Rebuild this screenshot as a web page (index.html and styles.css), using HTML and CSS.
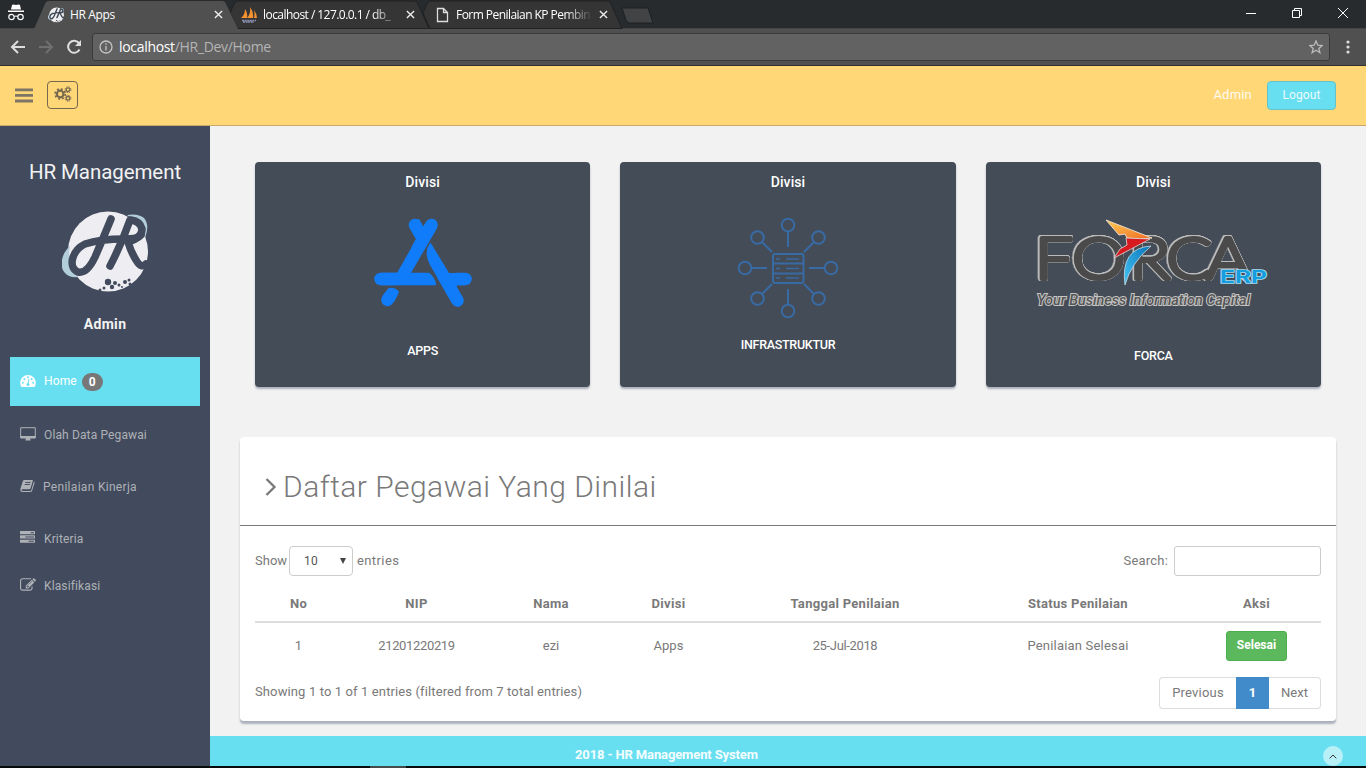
FILE: index.html
```html
<!DOCTYPE html>
<html lang="id">
<head>
<meta charset="utf-8">
<title>HR Apps</title>
<link rel="stylesheet" href="styles.css">
</head>
<body>
<svg class="defs" width="0" height="0">
  <defs>
    <symbol id="monogram" viewBox="0 0 86 82">
      <circle cx="46" cy="40.500" r="40" fill="#eeeef2"/>
      <path d="M8 35C-1 43-3 56 3 62Q7 67 16 66Q7 58 7 47Q7 40 8 35zM65 4Q76 2 82 7Q88 14 83 27Q79 14 65 4z" fill="#b3cedb"/>
      <g fill="none" stroke="currentColor" stroke-width="7.500" stroke-linecap="round" stroke-linejoin="round">
        <path d="M49 8Q40 30 33 46Q25 63 16 61C6 57 9 40 23 33Q38 28 62 28Q76 28 79 24"/>
        <path d="M68 9Q60 32 48 55M69 9Q78 10 80 18Q80 27 66 31Q69 41 74 49Q79 58 84 53"/>
      </g>
      <g fill="currentColor"><circle cx="46" cy="71" r="3.200"/><circle cx="53" cy="72" r="2"/><circle cx="50" cy="76" r="2.200"/><circle cx="57" cy="74" r="1.500"/><circle cx="63" cy="71" r="2"/><circle cx="67" cy="69" r="1.500"/><circle cx="68" cy="73" r="1.500"/><circle cx="42" cy="77" r="1.500"/><circle cx="38" cy="79" r="1.500"/><circle cx="60" cy="76" r="1"/></g>
    </symbol>
  </defs>
</svg>

<div class="browser">
  <div class="tabs">
    <svg class="incognito" viewBox="0 0 18 18" width="18" height="18"><path d="M5 1l1.500-.6 2.500.7 2.500-.7 1.500.6 1 4.500H4zM1 6.500h16v1.500H1z" fill="#fff"/><g fill="none" stroke="#fff" stroke-width="1.200"><circle cx="4.500" cy="13" r="2.700"/><circle cx="13.500" cy="13" r="2.700"/><path d="M7.200 12.500q1.800-1 3.600 0"/></g></svg>
    <div class="tab tab-active">
      <svg class="tab-shape" viewBox="0 0 206 29" preserveAspectRatio="none"><path d="M0 29L11 4q1-3 4-3H188q3 0 4 3l12 25z" fill="#505050"/></svg>
      <svg class="favicon logo-dark" width="16" height="16"><use href="#monogram"/></svg>
      <span class="tab-title">HR Apps</span>
      <svg class="close" viewBox="0 0 10 10"><path d="M1 1l8 8M9 1l-8 8"/></svg>
    </div>
    <div class="tab">
      <svg class="tab-shape" viewBox="0 0 206 29" preserveAspectRatio="none"><path d="M10 28.500L3 13 7 4q1-3 4-3H187q3 0 4 3l11 24.500z" fill="#353535" stroke="#202123"/></svg>
      <svg class="favicon" viewBox="0 0 16 16"><path d="M0 11Q4 8 4 2q3 4 2 9zM6 11Q10 7 9 0q4 5 3 11zM13 11q1-4 0-8 3 4 3 8z" fill="#f59331"/><path d="M1 13.500h14M2 15h11" stroke="#8b8fae" stroke-width="1.300" stroke-dasharray="2 .6"/></svg>
      <span class="tab-title tab-faded">localhost / 127.0.0.1 / db_</span>
      <svg class="close" viewBox="0 0 10 10"><path d="M1 1l8 8M9 1l-8 8"/></svg>
    </div>
    <div class="tab">
      <svg class="tab-shape" viewBox="0 0 206 29" preserveAspectRatio="none"><path d="M10 28.500L3 13 7 4q1-3 4-3H187q3 0 4 3l11 24.500z" fill="#353535" stroke="#202123"/></svg>
      <svg class="favicon" viewBox="0 0 16 16"><path d="M3.500 1.500h6l4 4v9h-10zM9.500 1.500v4h4" fill="none" stroke="#ddd" stroke-width="1.300"/></svg>
      <span class="tab-title tab-faded">Form Penilaian KP Pembin</span>
      <svg class="close" viewBox="0 0 10 10"><path d="M1 1l8 8M9 1l-8 8"/></svg>
    </div>
    <svg class="new-tab" viewBox="0 0 34 18"><path d="M1 1h26l5 15H9q-3 0-4-3z" fill="#414344" stroke="#1e2022"/></svg>
    <div class="window-controls">
      <svg viewBox="0 0 12 12"><path d="M1 6.500h10"/></svg>
      <svg viewBox="0 0 12 12"><path d="M1.500 3.500h7v7h-7zM3.500 3.500v-2h7v7h-2"/></svg>
      <svg viewBox="0 0 12 12"><path d="M1 1l10 10M11 1L1 11"/></svg>
    </div>
  </div>
  <div class="toolbar">
    <svg class="nav" viewBox="0 0 16 16"><path d="M15 8H2M8 2L2 8l6 6"/></svg>
    <svg class="nav nav-off" viewBox="0 0 16 16"><path d="M1 8h13M8 2l6 6-6 6"/></svg>
    <svg class="nav" viewBox="0 0 16 16"><path d="M13.500 10.500A6 6 0 1 1 12.800 4"/><path d="M15 1v6H9z" fill="#ddd" stroke="none"/></svg>
    <div class="address">
      <svg class="info" viewBox="0 0 14 14"><circle cx="7" cy="7" r="6"/><path d="M7 6v4.500M7 3.300v1.500"/></svg>
      <span class="url"><b>localhost</b>/HR_Dev/Home</span>
      <svg class="star" viewBox="0 0 14 14"><path d="M7 1l1.800 4.200 4.400.3-3.400 2.900 1.100 4.300L7 10.300l-3.900 2.400 1.100-4.300L.8 5.500l4.400-.3z"/></svg>
    </div>
    <svg class="menu-dots" viewBox="0 0 4 14"><circle cx="2" cy="2" r="1.600"/><circle cx="2" cy="7" r="1.600"/><circle cx="2" cy="12" r="1.600"/></svg>
  </div>
</div>

<header class="header">
  <svg class="bars" viewBox="0 0 18 15"><path d="M0 1.800h18M0 7.400h18M0 13h18"/></svg>
  <button class="gears-button">
    <svg viewBox="0 0 18 16" width="18" height="16" fill="none" stroke="#75684f"><circle cx="6.200" cy="8" r="3.300" stroke-width="2.200"/><circle cx="6.200" cy="8" r="5.100" stroke-width="1.600" stroke-dasharray="2 2"/><circle cx="14" cy="3.700" r="1.800" stroke-width="1.300"/><circle cx="14" cy="3.700" r="2.900" stroke-width="1" stroke-dasharray="1.280 1"/><circle cx="14" cy="12.300" r="1.800" stroke-width="1.300"/><circle cx="14" cy="12.300" r="2.900" stroke-width="1" stroke-dasharray="1.280 1"/></svg>
  </button>
  <span class="user-name">Admin</span>
  <button class="logout">Logout</button>
</header>

<div class="shell">
  <aside class="sidebar">
    <h3 class="brand">HR Management</h3>
    <svg class="avatar" width="86" height="82"><use href="#monogram"/></svg>
    <h5 class="role">Admin</h5>
    <nav class="side-menu">
      <a class="item item-active"><svg viewBox="0 0 16 14" width="16" height="14"><path d="M1.500 13Q.2 11 .2 8.800A7.800 7.800 0 0 1 15.800 8.800Q15.800 11 14.500 13z" fill="#fff"/><g fill="#68dff0"><circle cx="2.800" cy="8.800" r="1"/><circle cx="4.400" cy="5" r="1"/><circle cx="8" cy="3.300" r="1"/><circle cx="11.600" cy="5" r="1"/><circle cx="13.200" cy="8.800" r="1"/><circle cx="8" cy="10.500" r="1.500"/></g><path d="M8 10l1-5" stroke="#68dff0"/></svg><span class="label">Home</span><span class="badge">0</span></a>
      <a class="item item-desktop"><svg viewBox="0 0 16 14" width="16" height="14"><path d="M.7.700h14.600v10.300H.7z" fill="none" stroke="currentColor"/><path d="M.5 9h15v2H.5zM6 11h4l.6 2.500H5.400z" fill="currentColor"/></svg><span class="label">Olah Data Pegawai</span></a>
      <a class="item item-book"><svg viewBox="0 0 16 14" width="15" height="14"><path d="M4.500.5H13q1 0 .7 1l-2.500 8q-.3 1-1.300 1H2.500q-1 0-.8 1t1.300.8h8q.8 0 1-.8l2.400-8 .6-1.200q.8.500.5 1.500l-2.500 8q-.4 1.700-2 1.700H2.800Q.3 13.500.3 10.500L3 2Q3.500.5 4.500.5z" fill="currentColor"/><path d="M5.700 3.200h5.600M5 5.400h5.600" stroke="#424a5d"/></svg><span class="label">Penilaian Kinerja</span></a>
      <a class="item item-tasks"><svg viewBox="0 128 1792 1536" width="15" height="13"><path fill="currentColor" d="M1024 1408h640v-128h-640v128zm-384-512h1024v-128h-1024v128zm640-512h384v-128h-384v128zm512 832v256q0 26-19 45t-45 19h-1664q-26 0-45-19t-19-45v-256q0-26 19-45t45-19h1664q26 0 45 19t19 45zm0-512v256q0 26-19 45t-45 19h-1664q-26 0-45-19t-19-45v-256q0-26 19-45t45-19h1664q26 0 45 19t19 45zm0-512v256q0 26-19 45t-45 19h-1664q-26 0-45-19t-19-45v-256q0-26 19-45t45-19h1664q26 0 45 19t19 45z"/></svg><span class="label">Kriteria</span></a>
      <a class="item item-edit"><svg viewBox="0 128 1792 1536" width="16" height="14"><path fill="currentColor" d="M888 1184l116-116-152-152-116 116v56h96v96h56zm440-720q-16-16-33 1l-350 350q-17 17-1 33t33-1l350-350q17-17 1-33zm80 594v190q0 119-84.500 203.500t-203.500 84.500h-832q-119 0-203.500-84.500t-84.500-203.500v-832q0-119 84.500-203.500t203.500-84.500h832q63 0 117 25 15 7 18 23 3 17-9 29l-49 49q-14 14-32 8-23-6-45-6h-832q-66 0-113 47t-47 113v832q0 66 47 113t113 47h832q66 0 113-47t47-113v-126q0-13 9-22l64-64q15-15 35-7t20 29zm-96-738l288 288-672 672h-288v-288zm444 132l-92 92-288-288 92-92q28-28 68-28t68 28l152 152q28 28 28 68t-28 68z"/></svg><span class="label">Klasifikasi</span></a>
    </nav>
  </aside>

  <main class="main">
    <section class="cards">
      <article class="card">
        <h5 class="card-title">Divisi</h5>
        <svg class="pic-apps" viewBox="0 0 100 90" width="100" height="90"><g fill="none" stroke="#117cf9" stroke-width="12.500" stroke-linecap="round"><path d="M58.500 8L45 31M42 8L47 17M7.500 62H25M92.500 62H84M71 60L84.500 83.500M14.500 83L16 80.500"/></g><path d="M37 6L46 2 56 19 41 42 43 22zM53 5L64 11 38 56H24zM8 55.800H56Q63 61 63 68.300H8zM15 71.500Q21 69 26 74.500Q26 76 21 85L9 80zM57.500 25.500L76 56H92V68.300H84L79 86 57 48Q50 35 57.500 25.500z" fill="#117cf9"/></svg>
        <p class="card-name">APPS</p>
      </article>
      <article class="card card-infra">
        <h5 class="card-title">Divisi</h5>
        <svg class="pic-infra" viewBox="0 0 102 102" width="102" height="102" fill="none" stroke="#386aa3" stroke-width="2"><circle cx="51" cy="8" r="6.300"/><circle cx="81.500" cy="20.500" r="6.300"/><circle cx="94" cy="51" r="6.300"/><circle cx="81.500" cy="81.500" r="6.300"/><circle cx="51" cy="94" r="6.300"/><circle cx="20.500" cy="81.500" r="6.300"/><circle cx="8" cy="51" r="6.300"/><circle cx="20.500" cy="20.500" r="6.300"/><path d="M51 14.500V30M51 72v15.500M14.500 51H30M72 51h15.500M25 25l10 10M77 25L67 35M25 77l10-10M77 77L67 67"/><rect x="36" y="37" width="30.500" height="29" rx="2"/><path d="M36 46.500h30M36 56.500h30"/><path d="M49 42h13M49 51.500h13M49 61h13M39 42h4M39 51.500h4M39 61h4" stroke-width="1.500"/></svg>
        <p class="card-name">INFRASTRUKTUR</p>
      </article>
      <article class="card card-forca">
        <h5 class="card-title">Divisi</h5>
        <svg class="pic-forca" viewBox="0 0 236 96" width="236" height="96">
          <defs><linearGradient id="gold" x2="1" y2="1"><stop stop-color="#ffce54"/><stop offset="1" stop-color="#f06a22"/></linearGradient><linearGradient id="sky" x1="1" x2="0" y2="1"><stop stop-color="#0874ba"/><stop offset="1" stop-color="#45c5f4"/></linearGradient></defs>
          <text class="wordmark" transform="scale(1.180 1)" x="0 31.500 80 111.500 145" y="62">FORCA</text>
          <path d="M71 3L117 21 104 22 92 21 90 17 84 18z" fill="url(#gold)" stroke="#eadac5" stroke-width="1"/>
          <path d="M91 21L115 22 79 41 85 32 92 28z" fill="#d71920" stroke="#ddd" stroke-width=".8"/>
          <path d="M116 29Q85 31 90 68Q96 46 116 29z" fill="url(#sky)" stroke="#c8dce7" stroke-width=".8"/>
          <text class="erp" x="185" y="66" textLength="47" lengthAdjust="spacingAndGlyphs">ERP</text>
          <text class="tagline" x="2" y="88" textLength="213" lengthAdjust="spacingAndGlyphs">Your Business Information Capital</text>
        </svg>
        <p class="card-name">FORCA</p>
      </article>
    </section>

    <section class="panel">
      <h1 class="panel-title"><svg viewBox="0 0 12 20" width="12" height="20"><path d="M1.500 2l8 8-8 8" fill="none" stroke="#797979" stroke-width="2.300"/></svg><span>Daftar Pegawai Yang Dinilai</span></h1>
      <div class="controls">
        <span class="show">Show</span>
        <span class="select"><span>10</span><svg viewBox="0 0 6 6" width="6" height="6"><path d="M0 0h6L3 6z" fill="#444"/></svg></span>
        <span class="entries">entries</span>
        <label class="search">Search:<input type="text"></label>
      </div>
      <table class="table">
        <colgroup><col class="c1"><col class="c2"><col class="c3"><col class="c4"><col class="c5"><col class="c6"><col class="c7"></colgroup>
        <thead><tr><th>No</th><th>NIP</th><th>Nama</th><th>Divisi</th><th>Tanggal Penilaian</th><th>Status Penilaian</th><th>Aksi</th></tr></thead>
        <tbody><tr><td>1</td><td class="number">21201220219</td><td>ezi</td><td>Apps</td><td class="number">25-Jul-2018</td><td class="status">Penilaian Selesai</td><td><button class="done">Selesai</button></td></tr></tbody>
      </table>
      <div class="table-foot">
        <span class="summary">Showing 1 to 1 of 1 entries (filtered from 7 total entries)</span>
        <div class="pager"><span class="page-prev">Previous</span><span class="page-current">1</span><span class="page-next">Next</span></div>
      </div>
    </section>

    <footer class="footer"><span class="copyright">2018 - HR Management System</span><span class="go-top"><svg viewBox="0 0 8 5" width="8" height="5"><path d="M.7 4.300L4 1l3.300 3.300" fill="none" stroke="#333"/></svg></span></footer>
  </main>
</div>
<div class="taskbar"><i></i></div>
</body>
</html>
```
FILE: styles.css
```css
* { box-sizing: border-box; }
body { margin: 0; width: 1366px; height: 768px; overflow: hidden; display: flex; flex-direction: column; background: #f2f2f2; color: #797979; font: 13px/20px Roboto, "Liberation Sans", sans-serif; }
h1, h3, h5, p { margin: 0; font-weight: 400; }
button, input { font: inherit; margin: 0; }
svg { display: block; flex: none; }
.defs { position: absolute; }

.browser { height: 66px; flex: none; background: #505050; border-bottom: 1px solid #303030; font-family: "Open Sans", "Noto Sans", sans-serif; }
.tabs { height: 29px; display: flex; background: #272b2e; padding-left: 7px; border-bottom: 1px solid #454545; }
.incognito { margin: 4px 9px 0 0; }
.tab { position: relative; width: 193px; height: 29px; display: flex; align-items: center; padding-left: 14px; color: #fff; font-size: 12px; }
.tab-active { z-index: 2; }
.tab-shape { position: absolute; left: 0; top: 0; width: 206px; height: 29px; }
.favicon { position: relative; width: 16px; height: 16px; margin-right: 6px; }
.logo-dark { color: #404855; }
.tab-title { position: relative; width: 138px; white-space: nowrap; letter-spacing: -.35px; }
.tab-faded { width: 137px; letter-spacing: -.55px; -webkit-mask-image: linear-gradient(90deg, #000 80%, transparent); mask-image: linear-gradient(90deg, #000 80%, transparent); }
.close { position: relative; width: 9px; height: 9px; margin-left: 6px; stroke: #eee; stroke-width: 1.500; }
.new-tab { width: 34px; height: 18px; margin: 7px 0 0 8px; }
.window-controls { margin: 7px 17px 0 auto; display: flex; gap: 34px; }
.window-controls svg { width: 12px; height: 12px; fill: none; stroke: #fff; }
.toolbar { height: 36px; display: flex; align-items: center; padding: 0 15px 0 10px; }
.nav { width: 16px; height: 16px; margin-right: 12px; fill: none; stroke: #ddd; stroke-width: 2; }
.nav-off { stroke: #707070; }
.address { width: 1238px; height: 28px; margin-left: -2px; border: 1px solid #3a3a3a; border-radius: 3px; background: #626262; display: flex; align-items: center; padding: 0 6px; }
.info { width: 14px; height: 14px; fill: none; stroke: #c5c5c5; stroke-width: 1.300; }
.url { margin-left: 6px; font-size: 14px; color: #b4b4b4; letter-spacing: -.32px; }
.url b { font-weight: 400; color: #fff; }
.star { width: 14px; height: 14px; margin-left: auto; fill: none; stroke: #bbb; stroke-width: 1.300; }
.menu-dots { width: 4px; height: 14px; margin-left: 16px; fill: #ddd; }

.header { height: 60px; flex: none; display: flex; align-items: center; padding: 0 30px 0 15px; background: #ffd777; border-bottom: 1px solid #c5aa6a; }
.bars { width: 18px; height: 15px; stroke: #7d7565; stroke-width: 2.800; }
.gears-button { width: 31px; height: 28px; margin: -2px 0 0 14px; padding: 0 0 1px 6px; border: 1px solid #756750; border-radius: 4px; background: none; }
.user-name { margin: -2px 15px 0 auto; color: #fffaf0; font-size: 13px; letter-spacing: .2px; }
.logout { width: 69px; height: 29px; border: 1px solid #64c3c8; border-radius: 4px; background: #68dff0; color: #eafcff; font-size: 12px; letter-spacing: .1px; margin-top: -1px; }

.shell { flex: 1; min-height: 0; display: flex; }
.sidebar { width: 210px; flex: none; background: #424a5d; color: #aeb2b7; display: flex; flex-direction: column; align-items: center; }
.brand { margin-top: 32px; height: 28px; font-size: 20.500px; line-height: 28px; color: #f2f2f2; letter-spacing: -.08px; }
.avatar { margin-top: 25px; color: #424a5d; }
.role { margin-top: 21px; height: 20px; font-size: 14px; font-weight: 700; color: #f2f2f2; letter-spacing: .35px; }
.side-menu { width: 190px; margin-top: 23px; }
.item { display: flex; align-items: center; height: 52px; padding-left: 10px; font-size: 12px; letter-spacing: .13px; }
.item .label { margin-left: 8px; }
.item-active { height: 49px; background: #68dff0; color: #fff; margin-bottom: 3px; padding-bottom: 2px; }
.badge { margin: 3px 0 0 5px; width: 21px; height: 18px; border-radius: 10px; background: #777; font-weight: 700; text-align: center; line-height: 18px; }
.item-desktop svg { margin-top: -3px; }
.item-book { letter-spacing: .3px; }
.item-book svg, .item-tasks svg, .item-edit svg { margin-top: -3px; }
.item-tasks .label { margin-left: 9px; }
.item-edit { height: 42px; }

.main { flex: 1; min-width: 0; display: flex; flex-direction: column; }
.cards { display: grid; grid-template-columns: repeat(3, 1fr); gap: 30px; margin: 36px 45px 0; }
.card { height: 225px; border-radius: 4px; background: #444c57; box-shadow: 0 2px 2px #aab0bb; color: #fff; display: flex; flex-direction: column; align-items: center; }
.card-title { margin-top: 10px; height: 20px; font-size: 14px; font-weight: 500; letter-spacing: .1px; }
.card-name { font-size: 12.500px; font-weight: 500; letter-spacing: -.28px; }
.pic-apps { margin: 25px 0 34px; }
.pic-infra { margin: 25px 0 16px; }
.pic-forca { margin: 25px 0 33px; }
.wordmark { font-family: Lato, sans-serif; font-size: 57px; font-weight: 300; stroke-linejoin: round; stroke-linecap: round; fill: #4a4a4a; stroke: #4a4a4a; stroke-width: 4px; filter: drop-shadow(.8px 0 0 #bbb) drop-shadow(-.8px 0 0 #bbb) drop-shadow(0 .8px 0 #bbb) drop-shadow(0 -.8px 0 #bbb); }
.erp { font: 700 17px Inter, sans-serif; fill: #159ddd; stroke: #a6dcf6; stroke-width: 1.500px; paint-order: stroke; }
.tagline { font: italic 500 14px Roboto, sans-serif; fill: #555; stroke: #c4c4c4; stroke-width: 2px; paint-order: stroke; }

.panel { margin: 50px 30px 0; height: 284px; border-radius: 4px; background: #fff; box-shadow: 0 3px 2px #aab2bd; }
.panel-title { height: 89px; display: flex; align-items: center; padding: 12px 0 0 25px; border-bottom: 1px solid #797979; font-size: 30px; font-weight: 300; letter-spacing: .48px; }
.panel-title span { margin-left: 6px; }
.controls { height: 30px; margin: 20px 15px 0; display: flex; align-items: center; letter-spacing: .2px; }
.show { width: 32px; letter-spacing: 0; }
.select { width: 64px; height: 30px; margin: 0 4px 0 2px; padding: 0 6px 0 14px; border: 1px solid #ccc; border-radius: 4px; display: flex; align-items: center; justify-content: space-between; font-size: 12px; color: #555; }
.entries { letter-spacing: .4px; }
.search { margin-left: auto; display: flex; align-items: center; }
.search input { width: 147px; height: 30px; margin-left: 6px; border: 1px solid #ccc; border-radius: 3px; background: #fff; }
.table { width: 1066px; margin: 10px 15px 0; table-layout: fixed; border-collapse: separate; border-spacing: 0; text-align: center; }
.table th { height: 37px; padding: 0; font-weight: 700; letter-spacing: .3px; border-bottom: 2px solid #ddd; }
.table td { height: 45px; padding: 0; }
.table .number { letter-spacing: -.35px; }
.table .status { letter-spacing: .2px; }
.c1 { width: 87px; } .c2 { width: 149px; } .c3 { width: 120px; } .c4 { width: 115px; } .c5 { width: 238px; } .c6 { width: 228px; } .c7 { width: 129px; }
.done { width: 61px; height: 30px; padding: 0 0 2px; background: #5cb85c; border: 1px solid #4cae4c; border-radius: 3px; color: #fff; font-size: 12px; font-weight: 700; }
.table-foot { display: flex; justify-content: space-between; margin: 9px 15px 0; }
.summary { margin-top: 5px; letter-spacing: .12px; }
.pager { display: flex; height: 32px; line-height: 30px; text-align: center; }
.page-prev { width: 77px; border: 1px solid #ddd; border-right: 0; border-radius: 4px 0 0 4px; letter-spacing: .2px; }
.page-current { width: 33px; border: 1px solid #428bca; background: #428bca; color: #fff; font-weight: 700; }
.page-next { width: 52px; border: 1px solid #ddd; border-left: 0; border-radius: 0 4px 4px 0; }

.footer { position: relative; height: 30px; margin-top: auto; background: #68dff0; color: #f4fdff; display: flex; padding: 8px 23px 0 365px; font-weight: 700; letter-spacing: -.13px; }
.copyright { margin-top: 1px; }
.go-top { width: 20px; height: 20px; margin: 2px 0 0 auto; border-radius: 50%; background: #b8f0f7; display: flex; align-items: center; justify-content: center; }
.taskbar { height: 2px; flex: none; background: #080b0b; padding-left: 370px; }
.taskbar i { display: block; width: 36px; height: 2px; background: #454a4c; }
```
